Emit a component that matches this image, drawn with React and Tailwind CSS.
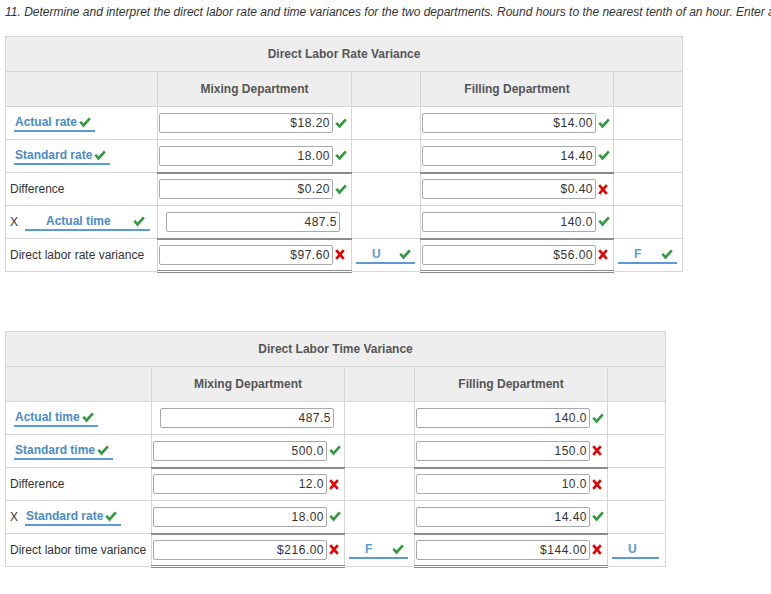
import React from "react";

const Check = () => (
  <svg width="12" height="11" viewBox="0 0 12 11" className="shrink-0">
    <path d="M0.3 5.6 L2.3 3.9 L4.5 6.4 L9.9 0.4 L11.8 2.2 L4.5 10.4 Z" fill="#2f9a3c" />
  </svg>
);

const Cross = () => (
  <svg width="10" height="11" viewBox="0 0 10 11" className="shrink-0">
    <path d="M1.2 1.2 L8.8 9.8 M8.8 1.2 L1.2 9.8" stroke="#e80000" strokeWidth="2.6" />
  </svg>
);

const Icon = ({ k }) => (k === "c" ? <Check /> : k === "x" ? <Cross /> : null);

const Input = ({ v }) => (
  <div className="w-[174px] h-[20px] border border-[#a9a9a9] rounded-[2px] bg-white flex items-center justify-end pr-[2px] text-[12px] tracking-[0.5px] text-[#333] leading-none">
    {v}
  </div>
);

const InCell = ({ v, k, thick, dbl }) => (
  <td
    className={
      "p-0 border border-[#d6d6d6] " +
      (thick ? "border-t-2 border-t-[#8c8c8c] " : "") +
      (dbl ? "border-b-[3px] border-b-[#8c8c8c] border-double " : "")
    }
  >
    <div className={"flex items-center gap-[2px] " + (k ? "pl-[1px]" : "pl-[8px]")}>
      <Input v={v} />
      <Icon k={k} />
    </div>
  </td>
);

const LabelSel = ({ t, w }) => (
  <span
    className={
      "inline-flex items-center h-[18px] border-b-2 border-[#5b9bd5] text-[12px] font-bold text-[#4a8bc9] leading-none " +
      (w ? "justify-between pl-[21px] pr-[5px] " + w : "pl-[1px] pr-[4px] gap-[2px]")
    }
  >
    <span>{t}</span>
    <Check />
  </span>
);

const DropSel = ({ t, k, w }) => (
  <span className={"inline-flex items-center h-[18px] border-b-2 border-[#5b9bd5] text-[12px] font-bold text-[#5b9bd5] leading-none " + w}>
    <span className="pl-[16px]">{t}</span>
    {k ? (
      <span className="ml-auto mr-[4px]">
        <Check />
      </span>
    ) : null}
  </span>
);

const Empty = ({ children, pl }) => (
  <td className={"p-0 border border-[#d6d6d6] " + (pl || "")}>
    <div className="flex items-center">{children}</div>
  </td>
);

const LabelCell = ({ children }) => (
  <td className="p-0 pl-[4px] border border-[#d6d6d6] text-[12px] text-[#333]">
    <div className="flex items-center">{children}</div>
  </td>
);

const SelCell = ({ children }) => (
  <td className="p-0 pl-[8px] border border-[#d6d6d6]">
    <div className="flex items-center">{children}</div>
  </td>
);

const XCell = ({ children }) => (
  <td className="p-0 pl-[4px] border border-[#d6d6d6] text-[12px] text-[#333]">
    <div className="flex items-center">
      <span className="w-[15px]">X</span>
      {children}
    </div>
  </td>
);

const Header = ({ title }) => (
  <thead>
    <tr className="h-[35px] bg-[#eeeeee]">
      <th colSpan={5} className="border border-[#d6d6d6] text-[12px] font-bold text-[#555] text-center">
        {title}
      </th>
    </tr>
    <tr className="h-[35px] bg-[#eeeeee]">
      <th className="border border-[#d6d6d6]"></th>
      <th className="border border-[#d6d6d6] text-[12px] font-bold text-[#555] text-center">Mixing Department</th>
      <th className="border border-[#d6d6d6]"></th>
      <th className="border border-[#d6d6d6] text-[12px] font-bold text-[#555] text-center">Filling Department</th>
      <th className="border border-[#d6d6d6]"></th>
    </tr>
  </thead>
);

export default function App() {
  return (
    <div className="font-['Liberation_Sans',Arial,sans-serif] bg-white w-[771px] h-[594px] overflow-hidden">
      <div className="pl-[5px] pt-[5px] h-[36px] whitespace-nowrap overflow-hidden text-[12px] italic text-[#333] leading-[14px]">
        11. Determine and interpret the direct labor rate and time variances for the two departments. Round hours to the nearest tenth of an hour. Enter all amounts as positive numbers.
      </div>

      <table className="ml-[5px] table-fixed border-collapse w-[677px]">
        <colgroup>
          <col className="w-[152px]" />
          <col className="w-[194px]" />
          <col className="w-[69px]" />
          <col className="w-[193px]" />
          <col className="w-[69px]" />
        </colgroup>
        <Header title="Direct Labor Rate Variance" />
        <tbody>
          <tr className="h-[33px]">
            <SelCell>
              <LabelSel t="Actual rate" />
            </SelCell>
            <InCell v="$18.20" k="c" />
            <Empty />
            <InCell v="$14.00" k="c" />
            <Empty />
          </tr>
          <tr className="h-[33px]">
            <SelCell>
              <LabelSel t="Standard rate" />
            </SelCell>
            <InCell v="18.00" k="c" />
            <Empty />
            <InCell v="14.40" k="c" />
            <Empty />
          </tr>
          <tr className="h-[33px]">
            <LabelCell>Difference</LabelCell>
            <InCell v="$0.20" k="c" thick />
            <Empty />
            <InCell v="$0.40" k="x" thick />
            <Empty />
          </tr>
          <tr className="h-[33px]">
            <XCell>
              <LabelSel t="Actual time" w="w-[125px]" />
            </XCell>
            <InCell v="487.5" />
            <Empty />
            <InCell v="140.0" k="c" />
            <Empty />
          </tr>
          <tr className="h-[33px]">
            <LabelCell>Direct labor rate variance</LabelCell>
            <InCell v="$97.60" k="x" thick dbl />
            <Empty pl="pl-[4px]">
              <DropSel t="U" k w="w-[59px]" />
            </Empty>
            <InCell v="$56.00" k="x" thick dbl />
            <Empty pl="pl-[4px]">
              <DropSel t="F" k w="w-[59px]" />
            </Empty>
          </tr>
        </tbody>
      </table>

      <div className="h-[58px]"></div>

      <table className="ml-[5px] table-fixed border-collapse w-[660px]">
        <colgroup>
          <col className="w-[146px]" />
          <col className="w-[193px]" />
          <col className="w-[70px]" />
          <col className="w-[193px]" />
          <col className="w-[58px]" />
        </colgroup>
        <Header title="Direct Labor Time Variance" />
        <tbody>
          <tr className="h-[33px]">
            <SelCell>
              <LabelSel t="Actual time" />
            </SelCell>
            <InCell v="487.5" />
            <Empty />
            <InCell v="140.0" k="c" />
            <Empty />
          </tr>
          <tr className="h-[33px]">
            <SelCell>
              <LabelSel t="Standard time" />
            </SelCell>
            <InCell v="500.0" k="c" />
            <Empty />
            <InCell v="150.0" k="x" />
            <Empty />
          </tr>
          <tr className="h-[33px]">
            <LabelCell>Difference</LabelCell>
            <InCell v="12.0" k="x" thick />
            <Empty />
            <InCell v="10.0" k="x" thick />
            <Empty />
          </tr>
          <tr className="h-[33px]">
            <XCell>
              <LabelSel t="Standard rate" />
            </XCell>
            <InCell v="18.00" k="c" />
            <Empty />
            <InCell v="14.40" k="c" />
            <Empty />
          </tr>
          <tr className="h-[33px]">
            <LabelCell>Direct labor time variance</LabelCell>
            <InCell v="$216.00" k="x" thick dbl />
            <Empty pl="pl-[4px]">
              <DropSel t="F" k w="w-[59px]" />
            </Empty>
            <InCell v="$144.00" k="x" thick dbl />
            <Empty pl="pl-[4px]">
              <DropSel t="U" w="w-[47px]" />
            </Empty>
          </tr>
        </tbody>
      </table>
    </div>
  );
}
